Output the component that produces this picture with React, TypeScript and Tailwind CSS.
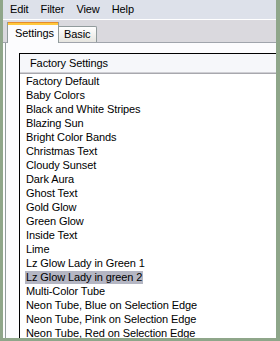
import React from 'react';

const presets = [
  'Factory Default',
  'Baby Colors',
  'Black and White Stripes',
  'Blazing Sun',
  'Bright Color Bands',
  'Christmas Text',
  'Cloudy Sunset',
  'Dark Aura',
  'Ghost Text',
  'Gold Glow',
  'Green Glow',
  'Inside Text',
  'Lime',
  'Lz Glow Lady in Green 1',
  'Lz Glow Lady in green 2',
  'Multi-Color Tube',
  'Neon Tube, Blue on Selection Edge',
  'Neon Tube, Pink on Selection Edge',
  'Neon Tube, Red on Selection Edge',
];

export default function App() {
  const selected = 'Lz Glow Lady in green 2';

  return (
    <div
      className="flex h-[341px] w-[280px] overflow-hidden bg-[#8fa68a] pb-[3px] pl-[3px] pr-[4px] text-[11px] tracking-[-0.1px] text-black"
      style={{ fontFamily: '"Liberation Sans", Arial, sans-serif' }}
    >
      <div className="flex flex-1 flex-col overflow-hidden bg-[#fcfcfe]">
        {/* Menu bar */}
        <div className="flex h-[19px] shrink-0 items-center gap-[12px] bg-[#dde1ea] pl-[7px]">
          <span>Edit</span>
          <span>Filter</span>
          <span>View</span>
          <span>Help</span>
        </div>
        <div className="h-px shrink-0 bg-white" />

        {/* Tabs */}
        <div className="flex h-[23px] shrink-0 items-end border-b border-[#a0a4ac] bg-[#dad9de] pl-[4px]">
          <div className="relative -mb-px flex h-[21px] w-[52px] flex-col border-x border-[#919b9c] bg-[#fcfcfe]">
            <div className="h-[1px] bg-[#e68b2c]" />
            <div className="h-[2px] bg-[#ffc83c]" />
            <div className="flex flex-1 items-center pl-[7px] pb-[1px]">Settings</div>
          </div>
          <div className="flex h-[16px] w-[38px] items-center rounded-tr-[2px] border-r border-t border-[#919b9c] bg-gradient-to-b from-white to-[#e6e5e0] pl-[5px]">
            Basic
          </div>
        </div>

        {/* Panel */}
        <div className="ml-[2px] flex flex-1 flex-col overflow-hidden border-l border-[#919b9c] pl-[13px] pt-[10px]">
          <div className="flex flex-1 flex-col overflow-hidden border-l border-t border-black bg-white">
            <div className="flex h-[18px] shrink-0 items-center bg-[#f6f7fa] pl-[10px]">Factory Settings</div>
            <div className="h-px shrink-0 bg-[#cfcfd4]" />
            <div className="h-px shrink-0 bg-[#a8a8ae]" />
            <div className="flex flex-col pl-[5px]">
              {presets.map((p) => (
                <div key={p} className="flex h-[14px] items-center whitespace-nowrap">
                  <span className={`px-[1px] leading-[13px] ${p === selected ? 'bg-[#b4b6c3]' : ''}`}>{p}</span>
                </div>
              ))}
            </div>
          </div>
        </div>
      </div>
    </div>
  );
}
